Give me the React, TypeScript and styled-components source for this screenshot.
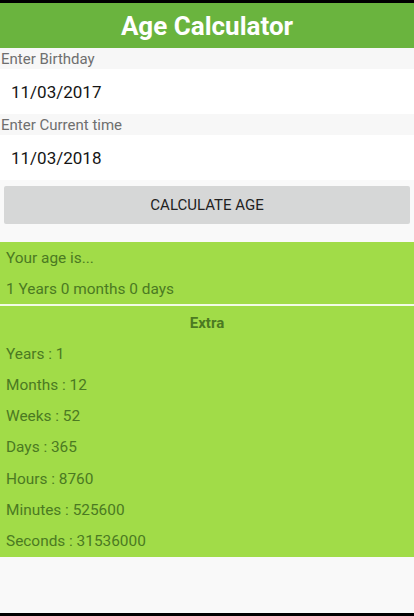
import React from "react";
import styled, { createGlobalStyle } from "styled-components";

const Global = createGlobalStyle`
  html, body { margin: 0; padding: 0; background: #000; }
  body { font-family: Roboto, "Noto Sans", "Liberation Sans", sans-serif; }
`;

const Frame = styled.div`
  width: 414px;
  height: 616px;
  box-sizing: border-box;
  padding: 3px 0;
  background: #000;
`;

const Screen = styled.div`
  height: 100%;
  background: #f9f9f9;
  display: flex;
  flex-direction: column;
`;

const Header = styled.header`
  height: 45px;
  background: #6ab43e;
  display: flex;
  align-items: center;
  justify-content: center;
  color: #fff;
  font-weight: 700;
  font-size: 26px;
`;

const Label = styled.div`
  height: 21px;
  background: #f7f7f7;
  color: #6f6f6f;
  font-size: 15px;
  display: flex;
  align-items: center;
  padding-left: 1px;
`;

const Field = styled.div`
  height: 45px;
  background: #fff;
  color: #151515;
  font-size: 17px;
  display: flex;
  align-items: center;
  padding-left: 11px;
`;

const Button = styled.button`
  margin: 6px 4px 18px;
  height: 38px;
  border: none;
  border-radius: 2px;
  background: #d6d7d7;
  color: #222;
  font-family: inherit;
  font-size: 15px;
  display: flex;
  align-items: center;
  justify-content: center;
`;

const Panel = styled.section<{ $pad?: number }>`
  background: #a1dc48;
  padding-top: ${(p) => p.$pad ?? 0}px;
  display: flex;
  flex-direction: column;
`;

const Divider = styled.div`
  height: 2px;
  background: #f2fbe6;
`;

const Row = styled.div<{ $h: number; $title?: boolean }>`
  height: ${(p) => p.$h}px;
  display: flex;
  align-items: center;
  justify-content: ${(p) => (p.$title ? "center" : "flex-start")};
  padding-left: ${(p) => (p.$title ? 0 : 6)}px;
  font-size: ${(p) => (p.$title ? 15 : 15.4)}px;
  font-weight: ${(p) => (p.$title ? 700 : 400)};
  color: #4b7a22;
`;

const extras = [
  "Years : 1",
  "Months : 12",
  "Weeks : 52",
  "Days : 365",
  "Hours : 8760",
  "Minutes : 525600",
  "Seconds : 31536000",
];

export default function App() {
  return (
    <Frame>
      <Global />
      <Screen>
        <Header>Age Calculator</Header>
        <Label>Enter Birthday</Label>
        <Field>11/03/2017</Field>
        <Label>Enter Current time</Label>
        <Field>11/03/2018</Field>
        <Button>CALCULATE AGE</Button>
        <Panel>
          <Row $h={31}>Your age is...</Row>
          <Row $h={31}>1 Years 0 months 0 days</Row>
        </Panel>
        <Divider />
        <Panel $pad={1}>
          <Row $h={31.2} $title>
            Extra
          </Row>
          {extras.map((t) => (
            <Row key={t} $h={31.2}>
              {t}
            </Row>
          ))}
        </Panel>
      </Screen>
    </Frame>
  );
}
